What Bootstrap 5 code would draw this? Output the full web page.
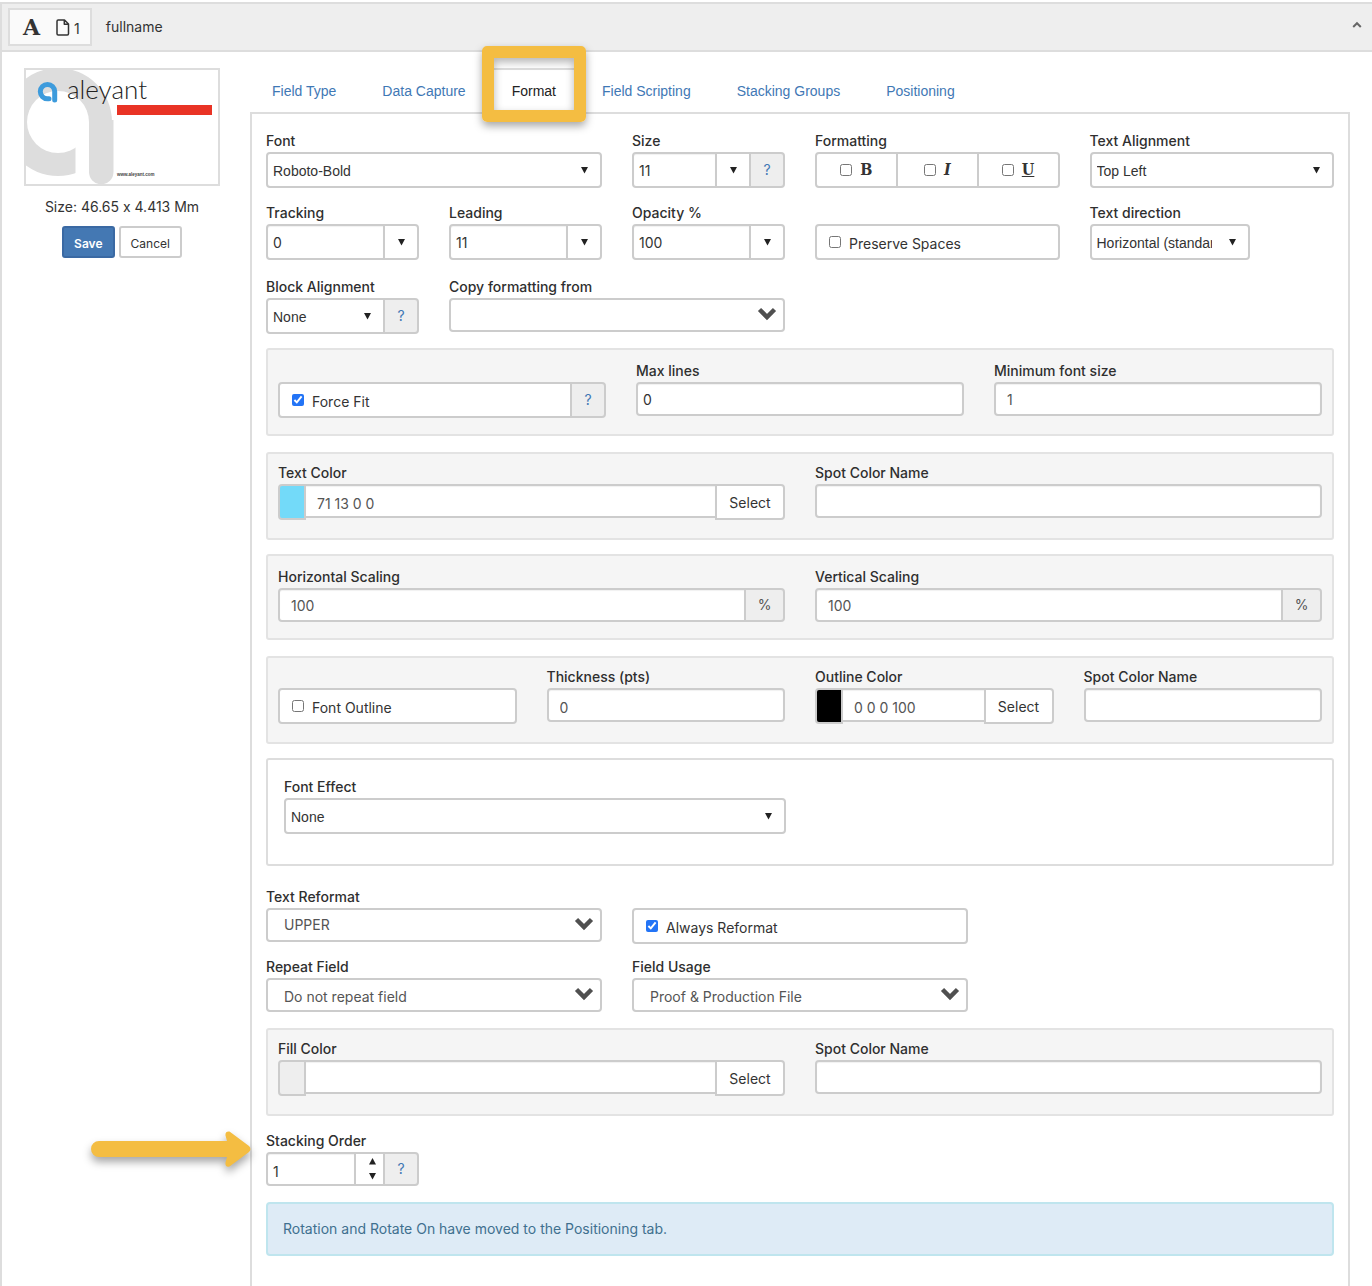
<!DOCTYPE html>
<html lang="en">
<head>
<meta charset="utf-8">
<meta name="viewport" content="width=device-width, initial-scale=1">
<title>Field settings: fullname</title>
<link href="https://cdn.jsdelivr.net/npm/bootstrap@5.3.0/dist/css/bootstrap.min.css" rel="stylesheet">
<style>
:root{--ui:Inter,"Liberation Sans",sans-serif;--helv:"Liberation Sans",Arial,sans-serif;--line:#ccc;--soft:#ddd;--link:#3f78b5}
body{font-family:var(--ui);font-size:14px;line-height:20px;color:#333;background:#fff;font-variant-ligatures:no-contextual}
.editor{border-left:2px solid var(--soft);margin-top:2px}
.editor-head{height:50px;background:#eee;border-top:2px solid var(--soft);border-bottom:2px solid var(--soft);padding:0 10px 0 6px;gap:14px}
.type-box{height:38px;background:#fafafa;border:2px solid var(--soft);padding:0 10px 0 13px}
.glyph{font-family:"DejaVu Serif",serif;font-weight:700}
.type-box .glyph{font-size:22px}
.editor-body{padding:16px 22px 0;gap:30px}
.side{width:196px;flex:none}
.preview{border:2px solid var(--soft);margin-bottom:11px}
.preview svg{display:block;width:100%}
.side .btn{--bs-btn-font-size:12px;--bs-btn-border-width:2px;--bs-btn-border-radius:3px;height:32px;padding:6px 10px 2px;line-height:20px}
.side-actions{margin-top:9px}
.btn-save{--bs-btn-bg:#4478b3;--bs-btn-border-color:#3a69a3;--bs-btn-color:#fff;--bs-btn-font-weight:600;--bs-btn-hover-bg:#36639a;--bs-btn-hover-color:#fff}
.btn-plain{--bs-btn-bg:#fff;--bs-btn-border-color:#ccc;--bs-btn-color:#333;--bs-btn-hover-bg:#eee}
.main-col{min-width:0}
.tabs-row{--bs-nav-tabs-border-width:2px;border-bottom:0;font-family:var(--helv);margin-bottom:-2px;position:relative;z-index:1}
.tabs-row .nav-item{position:relative;margin-right:2px}
.tabs-row .nav-link{height:46px;padding:11px 20px;margin:0;border:2px solid transparent;border-radius:4px 4px 0 0;color:var(--link)}
.tabs-row .nav-link.active{color:#222;border-color:var(--soft) var(--soft) #fff;background:#fff}
.ring{position:absolute;inset:-22px -8px -8px -8px;border:12px solid #f4bd42;border-radius:5px;box-shadow:0 4px 8px rgba(0,0,0,.35),inset 0 4px 8px rgba(0,0,0,.3);pointer-events:none}
.panel{border:2px solid var(--soft);border-bottom:0;padding:16px 14px 30px}
.panel .row{--bs-gutter-x:30px}
.gap-a{margin-top:14px}.gap-b{margin-top:16px}.gap-c{margin-top:20px}.gap-d{margin-top:12px}
.lbl{display:block;font-weight:500;line-height:22px;margin:0;color:#2f2f2f}
.no-lbl{margin-top:22px}
.well-box{background:#f5f5f5;border:2px solid #e3e3e3;border-radius:3px;padding:10px 10px 16px}
.well-box.snug{padding:8px 10px 18px}
.well-box.effect{background:#fff;padding:16px 16px 30px;border-color:#ddd}
.effect .pick{max-width:502px}
.fld,.pick{border:2px solid var(--line);border-radius:4px;background-color:#fff;color:#555;font-size:14px;line-height:20px;height:34px;padding:0 11px;box-shadow:inset 0 1px 1px rgba(0,0,0,.06);width:100%;min-width:0;font-family:var(--ui)}
.fld.tight{padding:0 5px;color:#333}
.fld.low,.pick.low{padding-top:4px}
.tall{height:36px}
.pick{appearance:none;font-family:var(--helv);color:#333;height:36px;padding:2px 36px 0 5px;box-shadow:none;background-repeat:no-repeat;background-position:right 12px center;background-image:url("data:image/svg+xml,%3Csvg xmlns='http://www.w3.org/2000/svg' width='7' height='7'%3E%3Cpath d='M0 0h7L3.5 6.5z' fill='%23222'/%3E%3C/svg%3E")}
.pick.wide{font-family:var(--ui);color:#555;height:34px;padding:0 36px 0 16px;background-position:right 6px top 7px;background-image:url("data:image/svg+xml,%3Csvg xmlns='http://www.w3.org/2000/svg' width='20' height='15'%3E%3Cpath d='M2.500 2.500 10 10l7.500-7.500' fill='none' stroke='%23505050' stroke-width='4.500'/%3E%3C/svg%3E")}
.pick.wide.low{padding-top:4px}
.pick.dir{width:160px}
.joined{display:flex}
.joined>*{border-radius:0}
.joined>:first-child{border-radius:4px 0 0 4px}
.joined>:last-child{border-radius:0 4px 4px 0}
.joined>*+*{margin-left:-2px}
.joined .fld,.joined .pick{flex:1 1 0}
.cell{flex:none;border:2px solid var(--line);background:#fff;width:36px;padding:0;display:flex;align-items:center;justify-content:center;color:#222}
.cell.help{background:#eee;color:var(--link);font-family:var(--ui);padding-bottom:1px}
.cell.unit{width:41px;background:#eee;color:#555}
.cell.sel{width:70px;color:#333;height:36px;padding-top:2px}
.swatch{flex:none;width:28px;height:36px;border:2px solid var(--line);background:#eee}
.swatch.cyan{background:#73daf9}.swatch.black{background:#000}
.joined.colors .fld{height:34px;z-index:1}
.tick{display:flex;align-items:center;gap:8px;height:36px;border:2px solid var(--line);border-radius:4px;background:#fff;padding:0 12px;color:#333;flex:1}
.tick span{padding-top:3px}
.tick input,.style-set input{width:12px;height:12px;margin:0;accent-color:#2374f6;flex:none}
.style-set{height:36px;border:2px solid var(--line);border-radius:4px}
.style-set label{flex:1;display:flex;align-items:center;justify-content:center;gap:8px}
.style-set label+label{border-left:2px solid var(--line)}
.style-set .glyph{font-family:"DejaVu Serif Condensed","DejaVu Serif",serif;font-size:16px}
.spin{flex-direction:column;gap:8px;width:31px;padding-left:5px}
.spin button{border:0;background:none;padding:0;line-height:0;display:block}
.note{background:#deebf6;border:2px solid #bfe5ee;border-radius:4px;color:#40708f;padding:15px;margin-bottom:0}
.pointer{position:absolute;left:-164px;top:-6px;pointer-events:none;filter:drop-shadow(0 5px 4px rgba(0,0,0,.35))}
</style>
<script src="https://cdn.jsdelivr.net/npm/bootstrap@5.3.0/dist/js/bootstrap.bundle.min.js"></script>
</head>
<body>
<svg width="0" height="0" class="position-absolute" aria-hidden="true">
  <symbol id="down" viewBox="0 0 7 7"><path d="M0 0h7L3.500 6.500z" fill="#222"/></symbol>
  <symbol id="up" viewBox="0 0 7 7"><path d="M0 6.500h7L3.500 0z" fill="#222"/></symbol>
</svg>
<div class="editor">
  <header class="editor-head d-flex align-items-center">
    <div class="type-box d-flex align-items-center">
      <span class="glyph">A</span>
      <svg class="ms-3" width="14" height="17" viewBox="0 0 14 17" fill="none" stroke="#333" stroke-width="1.500" stroke-linejoin="round"><path d="M1 2.200Q1 1 2.200 1H8.500L12.500 5V14.800Q12.500 16 11.300 16H2.200Q1 16 1 14.800ZM8.300 1V5.300H12.500"/></svg>
      <span class="ms-1 pt-1">1</span>
    </div>
    <span>fullname</span>
    <button type="button" class="btn p-0 pb-2 border-0 ms-auto lh-1" aria-label="Collapse"><svg width="10" height="8" viewBox="0 0 10 8"><path d="M1.200 6 5 2.200 8.800 6" fill="none" stroke="#666" stroke-width="2"/></svg></button>
  </header>
  <div class="editor-body d-flex">
    <aside class="side text-center">
      <div class="preview">
        <svg viewBox="0 0 192 114" role="img" aria-label="Business card preview">
          <circle cx="32" cy="52" r="54" fill="#ddd"/>
          <path d="M49.500 52H100V114H49.500z" fill="#fff"/>
          <circle cx="32" cy="52" r="31" fill="#fff"/>
          <path d="M63 50H87.500V102a12.200 12.200 0 0 1-24.500 0z" fill="#ddd"/>
          <path d="M23 28.800h-1.500a7.200 7.200 0 1 1 7.200-7.200V30" fill="none" stroke="#3d9bdc" stroke-width="5" stroke-linecap="round"/>
          <text x="41" y="29" font-family="Lato" font-weight="300" font-size="26" fill="#222">aleyant</text>
          <path d="M91 35h95v10H91z" fill="#e93325"/>
          <text x="91" y="106" font-family="Liberation Sans" font-weight="700" font-size="4.500" fill="#444">www.aleyant.com</text>
        </svg>
      </div>
      <div>Size: 46.65 x 4.413 Mm</div>
      <div class="side-actions d-flex justify-content-center gap-1">
        <button type="button" class="btn btn-save">Save</button>
        <button type="button" class="btn btn-plain">Cancel</button>
      </div>
    </aside>
    <main class="main-col flex-fill">
      <ul class="nav nav-tabs tabs-row">
        <li class="nav-item"><a class="nav-link" href="#">Field Type</a></li>
        <li class="nav-item"><a class="nav-link" href="#">Data Capture</a></li>
        <li class="nav-item"><a class="nav-link active" aria-current="page" href="#">Format</a><span class="ring"></span></li>
        <li class="nav-item"><a class="nav-link" href="#">Field Scripting</a></li>
        <li class="nav-item"><a class="nav-link" href="#">Stacking Groups</a></li>
        <li class="nav-item"><a class="nav-link" href="#">Positioning</a></li>
      </ul>
      <form class="panel">
        <div class="row">
          <div class="col-4"><label class="lbl" for="font">Font</label><select class="pick" id="font"><option>Roboto-Bold</option></select></div>
          <div class="col-2"><label class="lbl" for="size">Size</label>
            <div class="joined"><input class="fld tight tall" id="size" value="11"><button type="button" class="cell" aria-label="Sizes"><svg width="7" height="7"><use href="#down"/></svg></button><button type="button" class="cell help">?</button></div></div>
          <div class="col-3"><span class="lbl">Formatting</span>
            <div class="style-set d-flex">
              <label><input type="checkbox" aria-label="Bold"><span class="glyph">B</span></label>
              <label><input type="checkbox" aria-label="Italic"><span class="glyph fst-italic">I</span></label>
              <label><input type="checkbox" aria-label="Underline"><span class="glyph text-decoration-underline">U</span></label>
            </div></div>
          <div class="col-3"><label class="lbl" for="align">Text Alignment</label><select class="pick" id="align"><option>Top Left</option></select></div>
        </div>
        <div class="row gap-a">
          <div class="col-2"><label class="lbl" for="track">Tracking</label><div class="joined"><input class="fld tight tall" id="track" value="0"><button type="button" class="cell" aria-label="Tracking values"><svg width="7" height="7"><use href="#down"/></svg></button></div></div>
          <div class="col-2"><label class="lbl" for="lead">Leading</label><div class="joined"><input class="fld tight tall" id="lead" value="11"><button type="button" class="cell" aria-label="Leading values"><svg width="7" height="7"><use href="#down"/></svg></button></div></div>
          <div class="col-2"><label class="lbl" for="opac">Opacity %</label><div class="joined"><input class="fld tight tall" id="opac" value="100"><button type="button" class="cell" aria-label="Opacity values"><svg width="7" height="7"><use href="#down"/></svg></button></div></div>
          <div class="col-3"><label class="tick no-lbl"><input type="checkbox"><span>Preserve Spaces</span></label></div>
          <div class="col-3"><label class="lbl" for="dir">Text direction</label><select class="pick dir" id="dir"><option>Horizontal (standard)</option></select></div>
        </div>
        <div class="row gap-b">
          <div class="col-2"><label class="lbl" for="block">Block Alignment</label><div class="joined"><select class="pick" id="block"><option>None</option></select><button type="button" class="cell help">?</button></div></div>
          <div class="col-4"><label class="lbl" for="copy">Copy formatting from</label><select class="pick wide" id="copy"><option></option></select></div>
        </div>

        <div class="well-box gap-a"><div class="row">
          <div class="col-4"><div class="joined no-lbl"><label class="tick"><input type="checkbox" checked><span>Force Fit</span></label><button type="button" class="cell help">?</button></div></div>
          <div class="col-4"><label class="lbl" for="maxl">Max lines</label><input class="fld tight" id="maxl" value="0"></div>
          <div class="col-4"><label class="lbl" for="minf">Minimum font size</label><input class="fld" id="minf" value="1"></div>
        </div></div>

        <div class="well-box snug gap-b"><div class="row">
          <div class="col-6"><label class="lbl" for="tcol">Text Color</label><div class="joined colors"><span class="swatch cyan"></span><input class="fld low" id="tcol" value="71 13 0 0"><button type="button" class="cell sel">Select</button></div></div>
          <div class="col-6"><label class="lbl" for="spot1">Spot Color Name</label><input class="fld" id="spot1"></div>
        </div></div>

        <div class="well-box gap-a"><div class="row">
          <div class="col-6"><label class="lbl" for="hs">Horizontal Scaling</label><div class="joined"><input class="fld" id="hs" value="100"><span class="cell unit">%</span></div></div>
          <div class="col-6"><label class="lbl" for="vs">Vertical Scaling</label><div class="joined"><input class="fld" id="vs" value="100"><span class="cell unit">%</span></div></div>
        </div></div>

        <div class="well-box snug gap-b"><div class="row">
          <div class="col-3"><label class="tick no-lbl"><input type="checkbox"><span>Font Outline</span></label></div>
          <div class="col-3"><label class="lbl" for="thick">Thickness (pts)</label><input class="fld low" id="thick" value="0"></div>
          <div class="col-3"><label class="lbl" for="ocol">Outline Color</label><div class="joined colors"><span class="swatch black"></span><input class="fld low" id="ocol" value="0 0 0 100"><button type="button" class="cell sel">Select</button></div></div>
          <div class="col-3"><label class="lbl" for="spot2">Spot Color Name</label><input class="fld" id="spot2"></div>
        </div></div>

        <div class="well-box effect gap-a"><label class="lbl" for="fx">Font Effect</label><select class="pick" id="fx"><option>None</option></select></div>

        <div class="row gap-c">
          <div class="col-4"><label class="lbl" for="reform">Text Reformat</label><select class="pick wide" id="reform"><option>UPPER</option></select></div>
          <div class="col-4"><label class="tick no-lbl"><input type="checkbox" checked><span>Always Reformat</span></label></div>
        </div>
        <div class="row gap-d">
          <div class="col-4"><label class="lbl" for="rep">Repeat Field</label><select class="pick wide low" id="rep"><option>Do not repeat field</option></select></div>
          <div class="col-4"><label class="lbl" for="usage">Field Usage</label><select class="pick wide low" id="usage"><option>Proof &amp; Production File</option></select></div>
        </div>

        <div class="well-box snug gap-b"><div class="row">
          <div class="col-6"><label class="lbl" for="fcol">Fill Color</label><div class="joined colors"><span class="swatch"></span><input class="fld low" id="fcol"><button type="button" class="cell sel">Select</button></div></div>
          <div class="col-6"><label class="lbl" for="spot3">Spot Color Name</label><input class="fld" id="spot3"></div>
        </div></div>

        <div class="row gap-a">
          <div class="col-2 position-relative"><label class="lbl" for="order">Stacking Order</label>
            <div class="joined"><input class="fld tight low" id="order" value="1"><span class="cell spin"><button type="button" aria-label="Up"><svg width="7" height="7"><use href="#up"/></svg></button><button type="button" aria-label="Down"><svg width="7" height="7"><use href="#down"/></svg></button></span><button type="button" class="cell help">?</button></div>
            <svg class="pointer" width="164" height="50" viewBox="0 0 164 50"><path d="M12 17H140L138.500 11.500Q138 7 142.500 7.500L162 22Q165 25 162 28L142.500 42.500Q138 43.500 138.500 38.500L140 33H12a8 8 0 0 1 0-16z" fill="#f4bd42"/></svg>
          </div>
        </div>
        <div class="alert note gap-b" role="alert">Rotation and Rotate On have moved to the Positioning tab.</div>
      </form>
    </main>
  </div>
</div>
</body>
</html>
